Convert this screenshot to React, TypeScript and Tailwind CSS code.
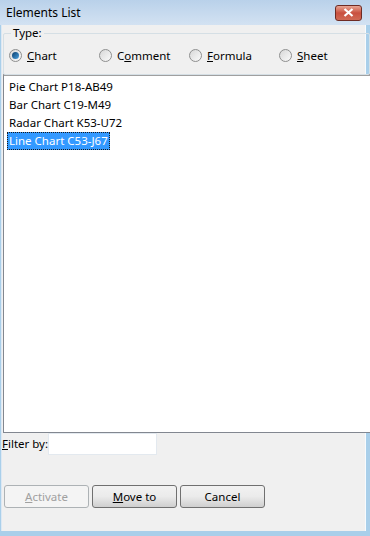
import React from "react";

const font = { fontFamily: '"Noto Sans", "Open Sans", sans-serif' };

function Under({ label, u }: { label: string; u: number }) {
  if (u < 0) return <span>{label}</span>;
  return (
    <span>
      {label.slice(0, u)}
      <span className="underline">{label[u]}</span>
      {label.slice(u + 1)}
    </span>
  );
}

function Radio({ checked, label, u }: { checked?: boolean; label: string; u: number }) {
  return (
    <div className="flex items-center gap-[5px] w-[90px]">
      <span className="w-[13px] h-[13px] rounded-full border border-[#8e8f8f] bg-gradient-to-br from-[#d8d8d8] to-[#fafafa] flex items-center justify-center shrink-0">
        {checked && <span className="w-[7px] h-[7px] rounded-full bg-gradient-to-br from-[#0a3f6e] to-[#4aa2e0]" />}
      </span>
      <span className="text-[11.5px] text-black leading-none">
        <Under label={label} u={u} />
      </span>
    </div>
  );
}

function Btn({ label, u, disabled }: { label: string; u: number; disabled?: boolean }) {
  return (
    <button
      className={
        "w-[85px] h-[23px] rounded-[3px] border text-[11.5px] leading-none flex items-center justify-center " +
        (disabled
          ? "border-[#adb2b5] bg-[#f4f4f4] text-[#a0a0a0]"
          : "border-[#707070] bg-gradient-to-b from-[#f2f2f2] via-[#ebebeb] to-[#cfcfcf] text-black")
      }
    >
      <Under label={label} u={u} />
    </button>
  );
}

export default function App() {
  return (
    <div className="w-[370px] h-[536px] bg-[#a9cfea] flex flex-col" style={font}>
      <div className="h-[25px] bg-gradient-to-b from-[#b9d1ea] to-[#d3e2f2] flex items-center justify-between pl-[6px] pr-[8px] shrink-0">
        <span className="text-[12px] text-black">Elements List</span>
        <div className="w-[27px] h-[16px] rounded-[3px] border border-[#6e2b23] bg-gradient-to-b from-[#e7a594] via-[#c9503f] to-[#d06a55] flex items-center justify-center">
          <svg width="11" height="9" viewBox="0 0 11 9">
            <path d="M1.5 1 L9.5 8 M9.5 1 L1.5 8" stroke="white" strokeWidth="2.2" />
          </svg>
        </div>
      </div>
      <div className="flex-1 flex ml-[1px] mr-[4px] mb-[5px] bg-[#f0f0f0] border-l border-[#dde8f3] border-r border-r-[#f7fbfe]">
        <div className="flex-1 flex flex-col">
          <div className="relative mt-[8px] mx-[1px] border border-[#d5dfe5] rounded-[2px] h-[42px] pt-[15px] pl-[5px]">
            <span className="absolute left-[7px] top-[-9px] px-[2px] bg-[#f0f0f0] text-[11.5px] leading-[16px] text-black">Type:</span>
            <div className="flex">
              <Radio checked label="Chart" u={0} />
              <Radio label="Comment" u={1} />
              <Radio label="Formula" u={0} />
              <Radio label="Sheet" u={0} />
            </div>
          </div>
          <div className="mt-[-1px] ml-[1px] h-[359px] bg-white border border-[#828790] border-t-[#a0a0a0] border-t-2 pt-[2px] pl-[3px] text-[11.5px] leading-[18px] text-black">
            <div className="px-[2px]">Pie Chart P18-AB49</div>
            <div className="px-[2px]">Bar Chart C19-M49</div>
            <div className="px-[2px]">Radar Chart K53-U72</div>
            <div className="inline-block px-[2px] bg-[#3399ff] text-white outline outline-1 outline-dotted outline-[#1a1a1a] -outline-offset-1">Line Chart C53-J67</div>
          </div>
          <div className="flex items-center h-[22px]">
            <span className="text-[11.5px] text-black w-[46px] whitespace-nowrap">
              <span className="underline">F</span>ilter by:
            </span>
            <div className="w-[109px] h-[22px] bg-white border border-[#e3e9ef]" />
          </div>
          <div className="flex gap-[3px] mt-[30px] pl-[2px]">
            <Btn label="Activate" u={0} disabled />
            <Btn label="Move to" u={0} />
            <Btn label="Cancel" u={-1} />
          </div>
        </div>
      </div>
    </div>
  );
}
